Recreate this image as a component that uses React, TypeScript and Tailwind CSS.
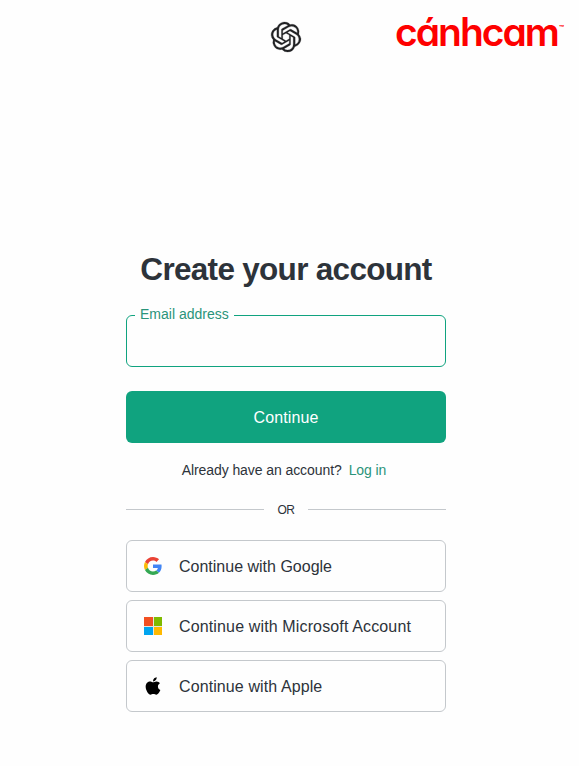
import type { ReactNode } from "react";
import { SiOpenai } from "react-icons/si";
import { FaApple } from "react-icons/fa";

function GoogleIcon() {
  return (
    <svg viewBox="0 0 48 48" className="h-[18px] w-[18px]">
      <path fill="#EA4335" d="M24 9.5c3.54 0 6.71 1.22 9.21 3.6l6.85-6.85C35.9 2.38 30.47 0 24 0 14.62 0 6.51 5.38 2.56 13.22l7.98 6.19C12.43 13.72 17.74 9.5 24 9.5z" />
      <path fill="#4285F4" d="M46.98 24.55c0-1.57-.15-3.09-.38-4.55H24v9.02h12.94c-.58 2.96-2.26 5.48-4.78 7.18l7.73 6c4.51-4.18 7.09-10.36 7.09-17.65z" />
      <path fill="#FBBC05" d="M10.53 28.59c-.48-1.45-.76-2.99-.76-4.59s.27-3.14.76-4.59l-7.98-6.19C.92 16.46 0 20.12 0 24c0 3.88.92 7.54 2.56 10.78l7.97-6.19z" />
      <path fill="#34A853" d="M24 48c6.48 0 11.93-2.13 15.89-5.81l-7.73-6c-2.15 1.45-4.92 2.3-8.16 2.3-6.26 0-11.57-4.22-13.47-9.91l-7.98 6.19C6.51 42.62 14.62 48 24 48z" />
    </svg>
  );
}

function MicrosoftIcon() {
  return (
    <div className="grid h-[18px] w-[18px] grid-cols-2 gap-px bg-[#e6e6df]">
      <span className="bg-[#f25022]" />
      <span className="bg-[#7fba00]" />
      <span className="bg-[#00a4ef]" />
      <span className="bg-[#ffb900]" />
    </div>
  );
}

function ProviderButton({ icon, label, spacing }: { icon: ReactNode; label: string; spacing: string }) {
  return (
    <button className="flex h-[52px] w-full items-center rounded-md border border-[#c4c8cc] pl-[17px] text-left text-base text-[#2d333a]">
      <span className="flex w-[18px] justify-center">{icon}</span>
      <span className={`ml-[17px] pt-0.5 whitespace-nowrap ${spacing}`}>{label}</span>
    </button>
  );
}

export default function App() {
  return (
    <div className="h-[766px] w-[579px] overflow-hidden bg-[#fefefe] font-['Liberation_Sans',Arial,sans-serif] text-[#2d333a]">
      <header className="flex h-[74px] items-center pl-[270px]">
        <SiOpenai className="h-8 w-8 shrink-0 overflow-visible stroke-[#202123] p-px text-[#202123] [stroke-width:0.2]" />
        <div className="ml-[93px] flex items-start pb-[10px] text-[#fe0000]">
          <span className="w-[164px] whitespace-nowrap font-['Inter',sans-serif] text-[39px] leading-[46px] font-semibold tracking-[-2px] [font-feature-settings:'cv11']">cánhcam</span>
          <span className="mt-[14px] font-['Inter',sans-serif] text-[8px] leading-[10px] font-bold">™</span>
        </div>
      </header>

      <main className="ml-[126px] flex w-[320px] flex-col pt-[171px]">
        <h1 className="text-center text-[31.5px] leading-12 font-bold tracking-[-0.7px] whitespace-nowrap">Create your account</h1>

        <fieldset className="mt-[14px] h-[60px] rounded-md border border-[#10a37f] pl-2">
          <legend className="relative -top-px px-[5px] text-sm leading-4 text-[#2a947a]">Email address</legend>
          <input aria-label="Email address" className="h-9 w-[290px] bg-transparent outline-none" />
        </fieldset>

        <button className="mt-6 h-[52px] rounded-md bg-[#10a37f] pt-0.5 text-base tracking-[0.1px] text-white">Continue</button>

        <p className="mt-[17px] pr-1 text-center text-sm leading-5 tracking-[-0.08px] whitespace-nowrap">
          Already have an account?<a className="ml-[7px] text-[#2a947a]">Log in</a>
        </p>

        <div className="mt-5 flex h-[18px] items-center text-xs">
          <span className="h-px flex-1 bg-[#c4c8cc]" />
          <span className="w-11 pt-px text-center tracking-[-0.5px]">OR</span>
          <span className="h-px flex-1 bg-[#c4c8cc]" />
        </div>

        <div className="mt-[22px] flex flex-col gap-2">
          <ProviderButton icon={<GoogleIcon />} label="Continue with Google" spacing="tracking-normal" />
          <ProviderButton icon={<MicrosoftIcon />} label="Continue with Microsoft Account" spacing="tracking-[0.14px]" />
          <ProviderButton icon={<FaApple className="h-5 w-5 text-black" />} label="Continue with Apple" spacing="tracking-[0.1px]" />
        </div>
      </main>
    </div>
  );
}
